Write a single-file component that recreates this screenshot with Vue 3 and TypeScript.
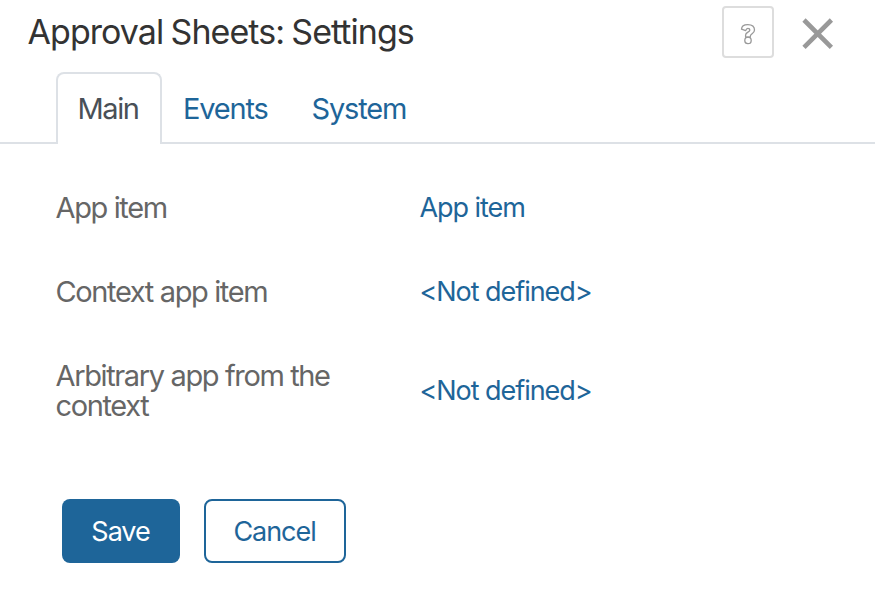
<script setup lang="ts">
interface Row { label: string; value: string; kind: string }
const rows: Row[] = [
  { label: 'App item', value: 'App item', kind: 'item' },
  { label: 'Context app item', value: '<Not defined>', kind: 'context' },
  { label: 'Arbitrary app from the context', value: '<Not defined>', kind: 'arbitrary' },
]
</script>

<template>
  <main class="dialog">
    <header class="header">
      <h1 class="title">Approval Sheets: Settings</h1>
      <button class="help" aria-label="Help">
        <svg width="16" height="22" viewBox="0 0 16 22" fill="none" stroke="#999" stroke-width="1.3" stroke-linejoin="round">
          <path d="M1.5 6.2C1.6 3.1 4.2 1.6 7.8 1.6C11.8 1.6 14.5 3.6 14.5 7C14.5 10.6 10.3 10.8 10.3 13.2V14.2H5.6V12C5.6 9.2 9.8 9.2 9.8 7.2C9.8 6 8.9 5.4 7.8 5.4C6.6 5.4 6.2 6.1 5.7 7.6Z" />
          <circle cx="8" cy="17.4" r="3.2" />
        </svg>
      </button>
      <button class="close" aria-label="Close">
        <svg width="32" height="32" viewBox="0 0 32 32" stroke="#999" stroke-width="4.6"><path d="M2 2L29.4 29.4M29.4 2L2 29.4" /></svg>
      </button>
    </header>
    <nav class="tabs">
      <a class="tab active">Main</a>
      <a class="tab events">Events</a>
      <a class="tab system">System</a>
    </nav>
    <section class="rows">
      <div v-for="row in rows" :key="row.kind" class="row">
        <div class="label">{{ row.label }}</div>
        <a class="value">{{ row.value }}</a>
      </div>
    </section>
    <footer class="footer">
      <button class="btn save">Save</button>
      <button class="btn cancel">Cancel</button>
    </footer>
  </main>
</template>

<style>
body { background: #fff; }
</style>

<style scoped>
.dialog { box-sizing: border-box; width: 875px; height: 592px; overflow: hidden; font-family: Inter, "Liberation Sans", sans-serif; font-weight: 390; color: #666; }
button { font: inherit; padding: 0; background: none; border: 0; box-sizing: border-box; }
.header { display: flex; height: 72px; padding: 6px 41px 0 27.5px; box-sizing: border-box; align-items: flex-start; }
.title { margin: 0; flex: 1; font-size: 34px; line-height: 52px; font-weight: 390; letter-spacing: -0.95px; word-spacing: -1.3px; color: #333; white-space: nowrap; }
.help { width: 52px; height: 52px; border: 2px solid #ddd; border-radius: 4px; display: grid; place-items: center; padding-top: 3px; }
.close { width: 32px; height: 32px; margin: 12px 0 0 28px; }
svg { display: block; }
.tabs { display: flex; height: 72px; box-sizing: border-box; padding-left: 56px; border-bottom: 2px solid #dde1e6; font-size: 29px; letter-spacing: -1.18px; color: #1e6599; }
.tab { box-sizing: border-box; height: 72px; line-height: 74px; white-space: nowrap; }
.active { width: 106px; padding-left: 19.5px; line-height: 70px; letter-spacing: -1.4px; color: #495057; border: 2px solid #dde1e6; border-bottom: 0; border-radius: 8px 8px 0 0; background: #fff; }
.events { padding-left: 21px; width: 149.5px; }
.rows { display: grid; grid-template-rows: 84px 84px 114px; padding: 22px 28px 0 55.5px; }
.row { display: grid; grid-template-columns: 364px 1fr; align-items: center; }
.label { width: 290px; font-size: 29px; line-height: 30px; letter-spacing: -1.37px; }
.value { font-size: 27px; line-height: 30px; letter-spacing: -1.05px; color: #1e6599; }
.footer { display: flex; gap: 24px; padding: 51px 0 0 62px; }
.btn { height: 64px; border-radius: 8px; font-size: 27px; letter-spacing: -1.05px; }
.save { width: 118px; padding-right: 1px; background: #1e6599; color: #fff; font-weight: 420; }
.cancel { width: 142px; padding-right: 1px; border: 2px solid #1e6599; color: #1e6599; font-weight: 370; }
</style>
